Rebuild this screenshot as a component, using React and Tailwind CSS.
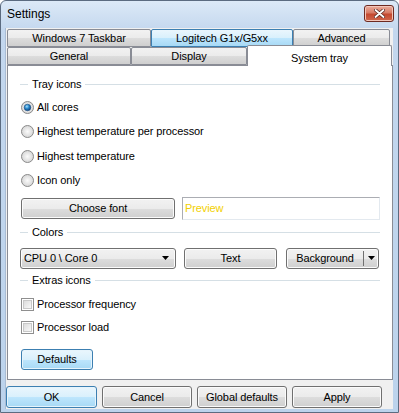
import React from 'react';

const btnGray =
  'border border-[#707070] rounded-[3px] bg-[linear-gradient(#f2f2f2,#ebebeb_50%,#dddddd_50%,#cfcfcf)] shadow-[inset_0_0_0_1px_#fbfbfb]';
const btnBlue =
  'border border-[#3c7fb1] rounded-[3px] bg-[linear-gradient(#eaf6fd,#d9f0fc_50%,#bee6fd_50%,#a7d9f5)] shadow-[inset_0_0_0_1px_#e6f4fc]';

function Radio({ checked }) {
  return (
    <svg width="13" height="13" viewBox="0 0 13 13" className="shrink-0">
      <defs>
        <radialGradient id="rfill" cx="50%" cy="50%" r="50%">
          <stop offset="0%" stopColor="#fbfbfb" />
          <stop offset="100%" stopColor="#d6d6d6" />
        </radialGradient>
        <radialGradient id="rdot" cx="40%" cy="35%" r="65%">
          <stop offset="0%" stopColor="#a9e0fb" />
          <stop offset="45%" stopColor="#2f8fd0" />
          <stop offset="100%" stopColor="#0b3f7c" />
        </radialGradient>
      </defs>
      <circle cx="6.5" cy="6.5" r="6" fill="url(#rfill)" stroke="#8a8a8a" />
      {checked && <circle cx="6.5" cy="6.5" r="3.3" fill="url(#rdot)" stroke="#1c4f83" strokeWidth="0.6" />}
    </svg>
  );
}

function Check() {
  return (
    <span className="w-[13px] h-[13px] shrink-0 border border-[#8f8f8f] bg-white p-[1px] flex">
      <span className="flex-1 border border-[#c8c8c8] bg-[linear-gradient(135deg,#dcdcdc,#f8f8f8)]" />
    </span>
  );
}

function Group({ label }) {
  return (
    <div className="h-[14px] flex items-center">
      <div className="w-[8px] h-px bg-[#d5dfe5]" />
      <span className="px-[4px] leading-none">{label}</span>
      <div className="flex-1 h-px bg-[#d5dfe5]" />
    </div>
  );
}

function Arrow() {
  return (
    <svg width="7" height="4" viewBox="0 0 7 4">
      <path d="M0 0h7L3.5 4z" fill="#000" />
    </svg>
  );
}

function Tab({ label, w, hot }) {
  return (
    <div
      className={`h-[18px] flex items-center justify-center border rounded-t-[2px] ${
        hot
          ? 'border-[#3c7fb1] bg-[linear-gradient(#eaf6fd,#d9f0fc_50%,#bee6fd_50%,#a7d9f5)]'
          : 'border-[#898c95] bg-[linear-gradient(#f2f2f2,#ebebeb_50%,#dddddd_50%,#cfcfcf)]'
      }`}
      style={{ width: w }}
    >
      {label}
    </div>
  );
}

export default function App() {
  const radios = [
    ['All cores', true, 'mt-[8px]'],
    ['Highest temperature per processor', false, 'mt-[8px]'],
    ['Highest temperature', false, 'mt-[9px]'],
    ['Icon only', false, 'mt-[8px]'],
  ];

  return (
    <div className="w-[399px] h-[413px] border border-[#5b6b80] rounded-t-[6px] bg-[linear-gradient(#dce9f7,#c3d7ee_30px,#bcd3ec)] flex flex-col font-['Liberation_Sans',Arial,sans-serif] text-[11px] tracking-[-0.1px] text-black overflow-hidden">
      {/* title bar */}
      <div className="h-[27px] flex items-start justify-between shrink-0">
        <span className="pl-[6px] pt-[7px] text-[12px] leading-none tracking-normal">Settings</span>
        <div className="mt-[4px] mr-[4px] w-[30px] h-[17px] rounded-[3px] border border-[#6d2a22] bg-[linear-gradient(#ebae9e,#d77b66_45%,#c4482f_55%,#d0684e)] flex items-center justify-center shadow-[inset_0_0_0_1px_#f3c7bb]">
          <svg width="11" height="9" viewBox="0 0 11 9">
            <path d="M1.5 1l8 7M9.5 1l-8 7" stroke="#5a2a24" strokeWidth="3.4" strokeLinecap="round" />
            <path d="M1.5 1l8 7M9.5 1l-8 7" stroke="#fff" strokeWidth="1.8" strokeLinecap="round" />
          </svg>
        </div>
      </div>

      {/* client */}
      <div className="ml-[4px] w-[388px] h-[381px] bg-[#f0f0f0] flex flex-col pt-[1px] border-l border-[#a9bcd4]">
        <div className="pl-[1px] flex">
          <Tab label="Windows 7 Taskbar" w={144} />
          <Tab label="Logitech G1x/G5xx" w={142} hot />
          <Tab label="Advanced" w={97} />
        </div>
        <div className="pl-[1px] flex items-start h-[18px]">
          <Tab label="General" w={124} />
          <Tab label="Display" w={116} />
          <div className="relative z-10 -mt-[2px] w-[145px] h-[21px] bg-white border border-b-0 border-[#898c95] rounded-t-[2px] flex items-start justify-center pt-[4px]">
            System tray
          </div>
        </div>

        {/* panel */}
        <div className="ml-[1px] w-[386px] h-[315px] bg-white border border-[#898c95] flex flex-col pl-[12px] pr-[12px]">
          <div className="mt-[11px]">
            <Group label="Tray icons" />
          </div>
          {radios.map(([label, checked, mt]) => (
            <div key={label} className={`${mt} h-[16px] flex items-center gap-[3px] pl-[1px]`}>
              <Radio checked={checked} />
              <span>{label}</span>
            </div>
          ))}

          <div className="mt-[9px] h-[23px] flex items-center gap-[7px]">
            <div className={`${btnGray} ml-[1px] w-[154px] h-[21px] flex items-center justify-center`}>Choose font</div>
            <div className="flex-1 h-[23px] border border-[#e3e9ef] border-t-[#abadb3] border-l-[#abadb3] flex items-center pl-[2px] text-[#f2d000]">
              Preview
            </div>
          </div>

          <div className="mt-[5px]">
            <Group label="Colors" />
          </div>

          <div className="mt-[8px] h-[22px] flex items-center">
            <div className={`${btnGray} w-[156px] h-[21px] flex items-center justify-between pl-[3px] pr-[6px]`}>
              <span>CPU 0 \ Core 0</span>
              <Arrow />
            </div>
            <div className={`${btnGray} ml-[8px] w-[93px] h-[21px] flex items-center justify-center`}>Text</div>
            <div className={`${btnGray} ml-[9px] w-[93px] h-[21px] flex items-center`}>
              <span className="flex-1 text-center">Background</span>
              <span className="w-px h-[15px] bg-[#707070]" />
              <span className="w-[14px] flex justify-center">
                <Arrow />
              </span>
            </div>
          </div>

          <div className="mt-[4px]">
            <Group label="Extras icons" />
          </div>

          <div className="mt-[9px] h-[16px] flex items-center gap-[3px] pl-[1px]">
            <Check />
            <span>Processor frequency</span>
          </div>
          <div className="mt-[7px] h-[16px] flex items-center gap-[3px] pl-[1px]">
            <Check />
            <span>Processor load</span>
          </div>

          <div className={`${btnBlue} mt-[14px] ml-[1px] w-[72px] h-[21px] flex items-center justify-center`}>Defaults</div>
        </div>

        {/* bottom buttons */}
        <div className="mt-[6px] flex gap-[5px]">
          <div className={`${btnBlue} w-[91px] h-[22px] flex items-center justify-center`}>OK</div>
          <div className={`${btnGray} w-[90px] h-[22px] flex items-center justify-center`}>Cancel</div>
          <div className={`${btnGray} w-[90px] h-[22px] flex items-center justify-center`}>Global defaults</div>
          <div className={`${btnGray} w-[90px] h-[22px] flex items-center justify-center`}>Apply</div>
        </div>
      </div>
    </div>
  );
}
